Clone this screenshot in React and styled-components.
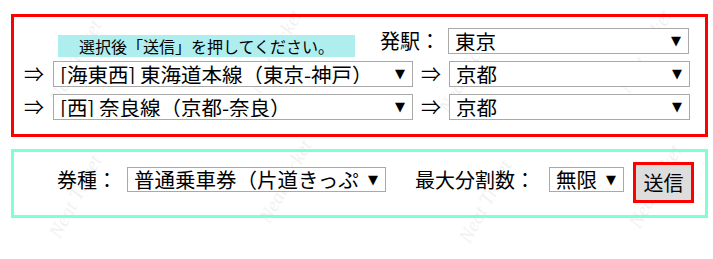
import React from "react";
import styled, { createGlobalStyle } from "styled-components";

const GlobalStyle = createGlobalStyle`
  body {
    margin: 0;
    background: #ffffff;
    font-family: "Noto Sans CJK JP", "Noto Sans", sans-serif;
    color: #000000;
  }
`;

const Pagina = styled.div`
  position: relative;
  width: 713px;
  height: 259px;
  overflow: hidden;
`;

const MarcaDagua = styled.span`
  position: absolute;
  left: ${(p) => p.x}px;
  top: ${(p) => p.y}px;
  font-family: "Liberation Serif", serif;
  font-style: italic;
  font-size: 20px;
  color: #000000;
  opacity: 0.05;
  transform: rotate(-62deg);
  white-space: nowrap;
  pointer-events: none;
  z-index: 0;
`;

const Conteudo = styled.div`
  position: relative;
  z-index: 1;
  padding-top: 14px;
  padding-left: 11px;
`;

const CaixaRota = styled.div`
  box-sizing: border-box;
  width: 697px;
  height: 123px;
  border: 3px solid #ff0000;
  padding: 11px 0 0 10px;
  display: flex;
  flex-direction: column;
  gap: 7px;
`;

const Linha = styled.div`
  display: flex;
  align-items: center;
  height: 26px;
`;

const Dica = styled.div`
  box-sizing: border-box;
  width: 297px;
  height: 22px;
  margin-left: 34px;
  margin-top: 10px;
  background: #afeeee;
  font-size: 16px;
  line-height: 22px;
  text-align: center;
`;

const Rotulo = styled.span`
  font-size: 20px;
  line-height: 26px;
  white-space: nowrap;
  text-align: right;
  width: ${(p) => (p.w ? `${p.w}px` : "auto")};
  margin-left: ${(p) => p.ml || 0}px;
  margin-right: ${(p) => p.mr || 0}px;
`;

const Seta = styled.span`
  width: ${(p) => p.w || 29}px;
  margin-left: ${(p) => p.ml || 0}px;
  font-size: 20px;
  line-height: 26px;
  text-align: left;
  font-family: "Noto Sans CJK JP", sans-serif;
`;

const CaixaSelecao = styled.div`
  position: relative;
  display: inline-block;
  width: ${(p) => p.w}px;
  height: ${(p) => p.h || 26}px;
  margin-left: ${(p) => p.ml || 0}px;
`;

const Selecao = styled.select`
  appearance: none;
  box-sizing: border-box;
  width: 100%;
  height: 100%;
  border: 1px solid #a9a9a9;
  border-radius: 0;
  background: #ffffff;
  font-family: "Noto Sans CJK JP", "Noto Sans", sans-serif;
  font-size: 20.5px;
  line-height: 1;
  padding: 0 26px 0 6px;
  color: #000000;
  outline: none;
  overflow: hidden;
  white-space: nowrap;
  text-overflow: clip;
`;

const Triangulo = styled.span`
  position: absolute;
  right: 8px;
  top: 50%;
  transform: translateY(-55%);
  font-family: "DejaVu Sans", sans-serif;
  font-size: 13px;
  background: #ffffff;
  pointer-events: none;
`;

const CaixaBilhete = styled.div`
  box-sizing: border-box;
  width: 697px;
  height: 69px;
  margin-top: 12px;
  border: 3px solid #7fffd4;
  display: flex;
  align-items: center;
  padding: 0 0 8px 43px;
`;

const Botao = styled.button`
  box-sizing: border-box;
  width: 61px;
  height: 41px;
  margin-left: 9px;
  margin-top: 6px;
  border: 3px solid #ff0000;
  background: #dddddd;
  font-family: "Noto Sans CJK JP", sans-serif;
  font-size: 20px;
  padding: 0;
  color: #000000;
`;

function Escolha({ w, h, ml, valor }) {
  return (
    <CaixaSelecao w={w} h={h} ml={ml}>
      <Selecao defaultValue={valor}>
        <option value={valor}>{valor}</option>
      </Selecao>
      <Triangulo>▼</Triangulo>
    </CaixaSelecao>
  );
}

const marcas = [
  [30, 50], [230, 40], [420, 60], [600, 40],
  [30, 185], [240, 170], [440, 190], [610, 175],
];

export default function App() {
  return (
    <Pagina>
      <GlobalStyle />
      {marcas.map(([x, y], i) => (
        <MarcaDagua key={i} x={x} y={y}>Neat Ticket</MarcaDagua>
      ))}
      <Conteudo>
        <CaixaRota>
          <Linha>
            <Dica>選択後「送信」を押してください。</Dica>
            <Rotulo w={85} mr={8}>発駅：</Rotulo>
            <Escolha w={241} valor="東京" />
          </Linha>
          <Linha>
            <Seta>⇒</Seta>
            <Escolha w={360} valor="[海東西] 東海道本線（東京-神戸）" />
            <Seta ml={8} w={28}>⇒</Seta>
            <Escolha w={241} valor="京都" />
          </Linha>
          <Linha>
            <Seta>⇒</Seta>
            <Escolha w={360} valor="[西] 奈良線（京都-奈良）" />
            <Seta ml={8} w={28}>⇒</Seta>
            <Escolha w={241} valor="京都" />
          </Linha>
        </CaixaRota>
        <CaixaBilhete>
          <Rotulo>券種：</Rotulo>
          <Escolha w={259} h={25} ml={10} valor="普通乗車券（片道きっぷ）" />
          <Rotulo ml={29}>最大分割数：</Rotulo>
          <Escolha w={75} h={25} ml={14} valor="無限" />
          <Botao>送信</Botao>
        </CaixaBilhete>
      </Conteudo>
    </Pagina>
  );
}
